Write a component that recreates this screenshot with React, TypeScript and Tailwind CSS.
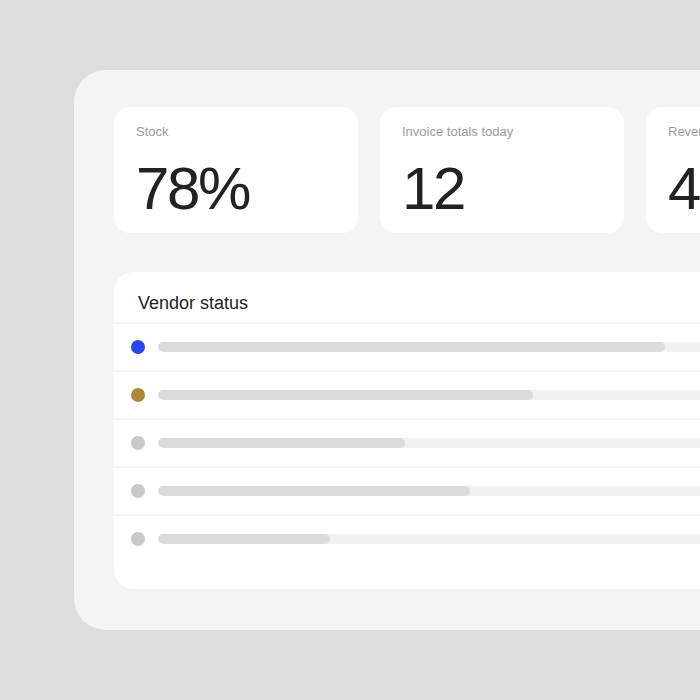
import React from "react";

const stats = [
  { label: "Stock", value: "78%" },
  { label: "Invoice totals today", value: "12" },
  { label: "Revenue", value: "4" },
];

const rows = [
  { dot: "bg-[#2447f6]", fill: 507 },
  { dot: "bg-[#ae8835]", fill: 375 },
  { dot: "bg-[#c9c9c9]", fill: 247 },
  { dot: "bg-[#c9c9c9]", fill: 312 },
  { dot: "bg-[#c9c9c9]", fill: 172 },
];

export default function App() {
  return (
    <div
      className="w-[700px] h-[700px] overflow-hidden bg-[#dddddd] pt-[70px] pl-[74px]"
      style={{ fontFamily: '"Liberation Sans", Arial, sans-serif' }}
    >
      <div className="w-[800px] h-[560px] rounded-[32px] bg-[#f4f4f4] pt-[37px] pl-[40px]">
        <div className="flex gap-[22px]">
          {stats.map((s) => (
            <div
              key={s.label}
              className="w-[244px] h-[126px] shrink-0 rounded-[16px] bg-white pl-[22px] pt-[17px]"
            >
              <div className="text-[13px] leading-4 text-[#9b9b9b] whitespace-nowrap">
                {s.label}
              </div>
              <div className="mt-[19px] text-[60px] leading-[60px] tracking-[-0.04em] text-[#222222]">
                {s.value}
              </div>
            </div>
          ))}
        </div>
        <div className="mt-[39px] w-[700px] h-[317px] rounded-[20px] bg-white">
          <div className="h-[50px] pl-[24px] pt-[19px] text-[18px] leading-6 text-[#222222]">
            Vendor status
          </div>
          {rows.map((r, i) => (
            <div
              key={i}
              className="h-[48px] border-t-[2px] border-[#f4f4f4] flex items-center pl-[17px]"
            >
              <div className={`w-[14px] h-[14px] rounded-full shrink-0 ${r.dot}`} />
              <div className="ml-[13px] flex-1 h-[10px] rounded-l-full bg-[#f1f1f0] overflow-hidden">
                <div
                  className="h-full rounded-full bg-[#dcdcdc]"
                  style={{ width: r.fill }}
                />
              </div>
            </div>
          ))}
        </div>
      </div>
    </div>
  );
}
